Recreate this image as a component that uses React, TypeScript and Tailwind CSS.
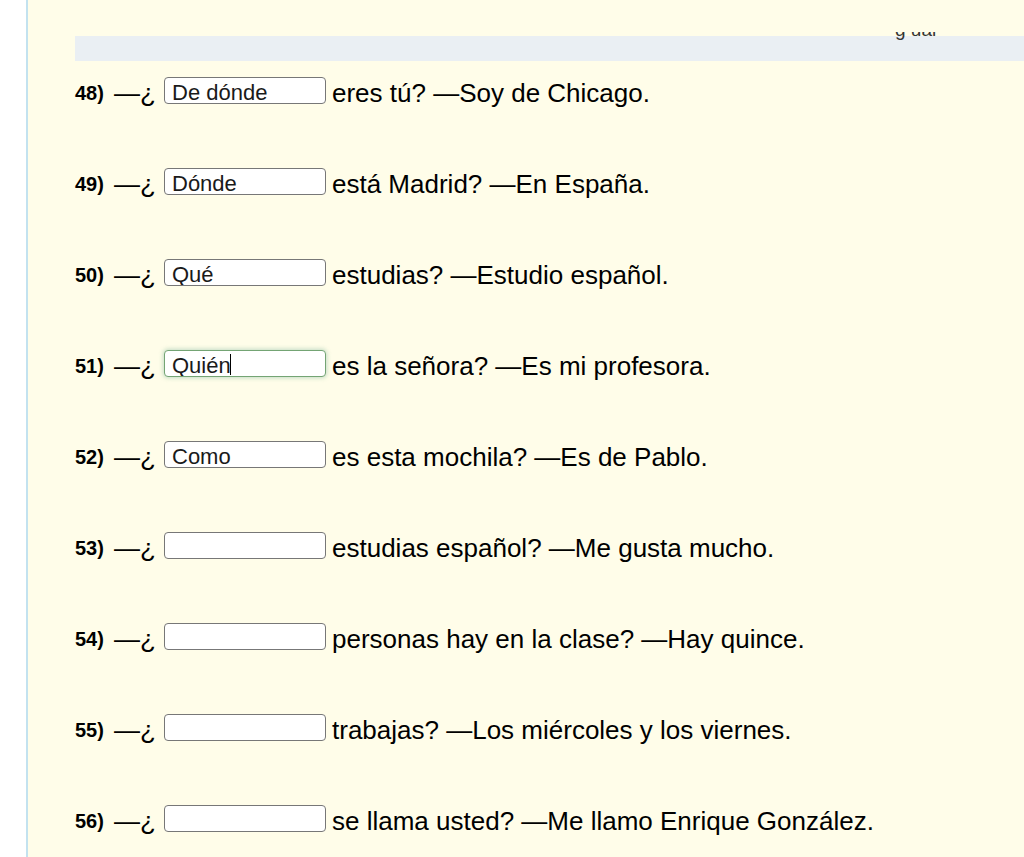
import React from "react";

interface Row {
  n: number;
  value: string;
  rest: string;
  focused?: boolean;
}

const rows: Row[] = [
  { n: 48, value: "De dónde", rest: "eres tú? —Soy de Chicago." },
  { n: 49, value: "Dónde", rest: "está Madrid? —En España." },
  { n: 50, value: "Qué", rest: "estudias? —Estudio español." },
  { n: 51, value: "Quién", rest: "es la señora? —Es mi profesora.", focused: true },
  { n: 52, value: "Como", rest: "es esta mochila? —Es de Pablo." },
  { n: 53, value: "", rest: "estudias español? —Me gusta mucho." },
  { n: 54, value: "", rest: "personas hay en la clase? —Hay quince." },
  { n: 55, value: "", rest: "trabajas? —Los miércoles y los viernes." },
  { n: 56, value: "", rest: "se llama usted? —Me llamo Enrique González." },
];

function QuestionRow({ row }: { row: Row }) {
  return (
    <div className="flex items-center h-[26px] text-black">
      <span className="w-[39px] text-[20px] font-bold leading-none mt-[6px]">
        {row.n})
      </span>
      <span className="w-[50px] text-[26px] leading-none mt-[6px]">—¿</span>
      <div className="relative">
        <input
          type="text"
          defaultValue={row.value}
          readOnly
          className={`block w-[162px] h-[27px] rounded-[4px] bg-white pl-[7px] pr-1 pt-[4px] pb-0 text-[22px] text-[#1a1a1a] outline-none ${
            row.focused
              ? "border border-[#74a474] shadow-[0_0_4px_1px_rgba(120,180,150,0.45)]"
              : "border border-[#777777]"
          }`}
        />
        {row.focused && (
          <span className="absolute left-[66px] top-[4px] h-[21px] w-px bg-black" />
        )}
      </div>
      <span className="ml-[6px] text-[26px] leading-none mt-[6px] whitespace-nowrap">
        {row.rest}
      </span>
    </div>
  );
}

export default function App() {
  return (
    <div className="min-h-screen bg-white font-['Liberation_Sans',Arial,sans-serif]">
      <div className="ml-[26px] min-h-[857px] border-l-2 border-[#c3e2ef] bg-[#fffde9] pt-[36px] pl-[47px] overflow-hidden">
        <div className="relative h-[25px] bg-[#eaeff3]">
          <div className="absolute left-[820px] -top-[4px] h-[10px] overflow-hidden">
            <div className="-mt-[12px] text-[19px] leading-none text-[#333] whitespace-nowrap">
              g ual
            </div>
          </div>
        </div>
        <div className="mt-[16px] flex flex-col gap-[65px]">
          {rows.map((row) => (
            <QuestionRow key={row.n} row={row} />
          ))}
        </div>
      </div>
    </div>
  );
}
